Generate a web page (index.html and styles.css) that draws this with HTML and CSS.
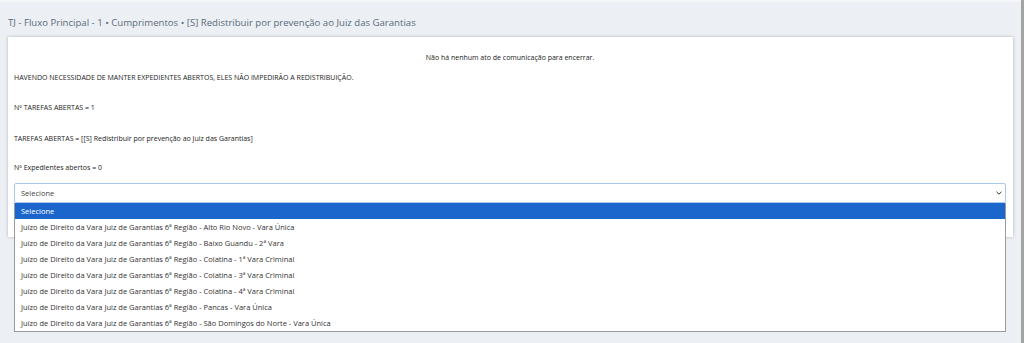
FILE: index.html
```html
<!DOCTYPE html>
<html lang="pt-BR">
<head>
    <meta charset="UTF-8">
    <title>Redistribuir por prevenção</title>
    <link rel="stylesheet" href="styles.css">
</head>
<body>
    <div class="page">
        <div class="title">TJ - Fluxo Principal - 1 • Cumprimentos • [S] Redistribuir por prevenção ao Juiz das Garantias</div>

        <div class="card">
            <p class="aviso">Não há nenhum ato de comunicação para encerrar.</p>
            <p class="linha l1">HAVENDO NECESSIDADE DE MANTER EXPEDIENTES ABERTOS, ELES NÃO IMPEDIRÃO A REDISTRIBUIÇÃO.</p>
            <p class="linha l2">Nº TAREFAS ABERTAS = 1</p>
            <p class="linha l3">TAREFAS ABERTAS = [[S] Redistribuir por prevenção ao Juiz das Garantias]</p>
            <p class="linha l4">Nº Expedientes abertos = 0</p>

            <div class="combo">
                <div class="campo">
                    <span>Selecione</span>
                    <svg class="seta" width="6" height="4" viewBox="0 0 6 4"><path d="M0.5 0.8 L3 3.2 L5.5 0.8" fill="none" stroke="#333" stroke-width="1"/></svg>
                </div>
                <!-- lista aberta por cima do resto da tela -->
                <ul class="lista">
                    <li class="ativo">Selecione</li>
                    <li>Juízo de Direito da Vara Juiz de Garantias 6ª Região - Alto Rio Novo - Vara Única</li>
                    <li>Juízo de Direito da Vara Juiz de Garantias 6ª Região - Baixo Guandu - 2ª Vara</li>
                    <li>Juízo de Direito da Vara Juiz de Garantias 6ª Região - Colatina - 1ª Vara Criminal</li>
                    <li>Juízo de Direito da Vara Juiz de Garantias 6ª Região - Colatina - 3ª Vara Criminal</li>
                    <li>Juízo de Direito da Vara Juiz de Garantias 6ª Região - Colatina - 4ª Vara Criminal</li>
                    <li>Juízo de Direito da Vara Juiz de Garantias 6ª Região - Pancas - Vara Única</li>
                    <li>Juízo de Direito da Vara Juiz de Garantias 6ª Região - São Domingos do Norte - Vara Única</li>
                </ul>
            </div>
        </div>
    </div>
    <div class="barra"></div>
</body>
</html>
```

FILE: styles.css
```css
html, body {
    margin: 0;
    height: 100%;
}
body {
    font-family: "Open Sans", "Noto Sans", sans-serif;
    background-color: #eceff3;
    color: #222;
    overflow: hidden;
    display: flex;
}
div.page {
    flex: 1;
    padding: 14px 8px 0 8px;
    border-top: 2px solid #f6f7f9;
}
div.title {
    font-size: 9.6px;
    color: #5b6b7c;
    height: 21px;
    line-height: 14px;
}
div.card {
    background-color: #fff;
    height: 200px;
    box-shadow: 0 0 3px rgba(0, 0, 0, 0.25);
    padding: 0 7px 0 6px;
    box-sizing: border-box;
    font-size: 7px;
}
div.card p {
    margin: 0;
    line-height: 10px;
}
p.aviso {
    text-align: center;
    padding-top: 16px;
}
p.l1 { margin-top: 10px !important; }
p.l2 { margin-top: 20px !important; }
p.l3 { margin-top: 21px !important; }
p.l4 { margin-top: 19px !important; }

div.combo {
    position: relative;
    margin-top: 10px;
}
div.campo {
    height: 20px;
    border: 1px solid #a8c8ec;
    border-radius: 2px;
    box-sizing: border-box;
    display: flex;
    align-items: center;
    justify-content: space-between;
    padding: 0 3px 0 6px;
    color: #444;
    font-size: 7.5px;
}
svg.seta {
    display: block;
}
ul.lista {
    position: absolute;
    left: 0;
    right: 0;
    top: 20px;
    margin: 0;
    padding: 0;
    list-style: none;
    background-color: #fff;
    border: 1px solid #9a9a9a;
    border-top: none;
    font-size: 7.5px;
    color: #333;
}
ul.lista li {
    height: 16px;
    line-height: 16px;
    padding-left: 6px;
    white-space: nowrap;
}
ul.lista li.ativo {
    background-color: #1b66cd;
    color: #fff;
}
div.barra {
    width: 3px;
    background-color: #a3a3a3;
}
```
